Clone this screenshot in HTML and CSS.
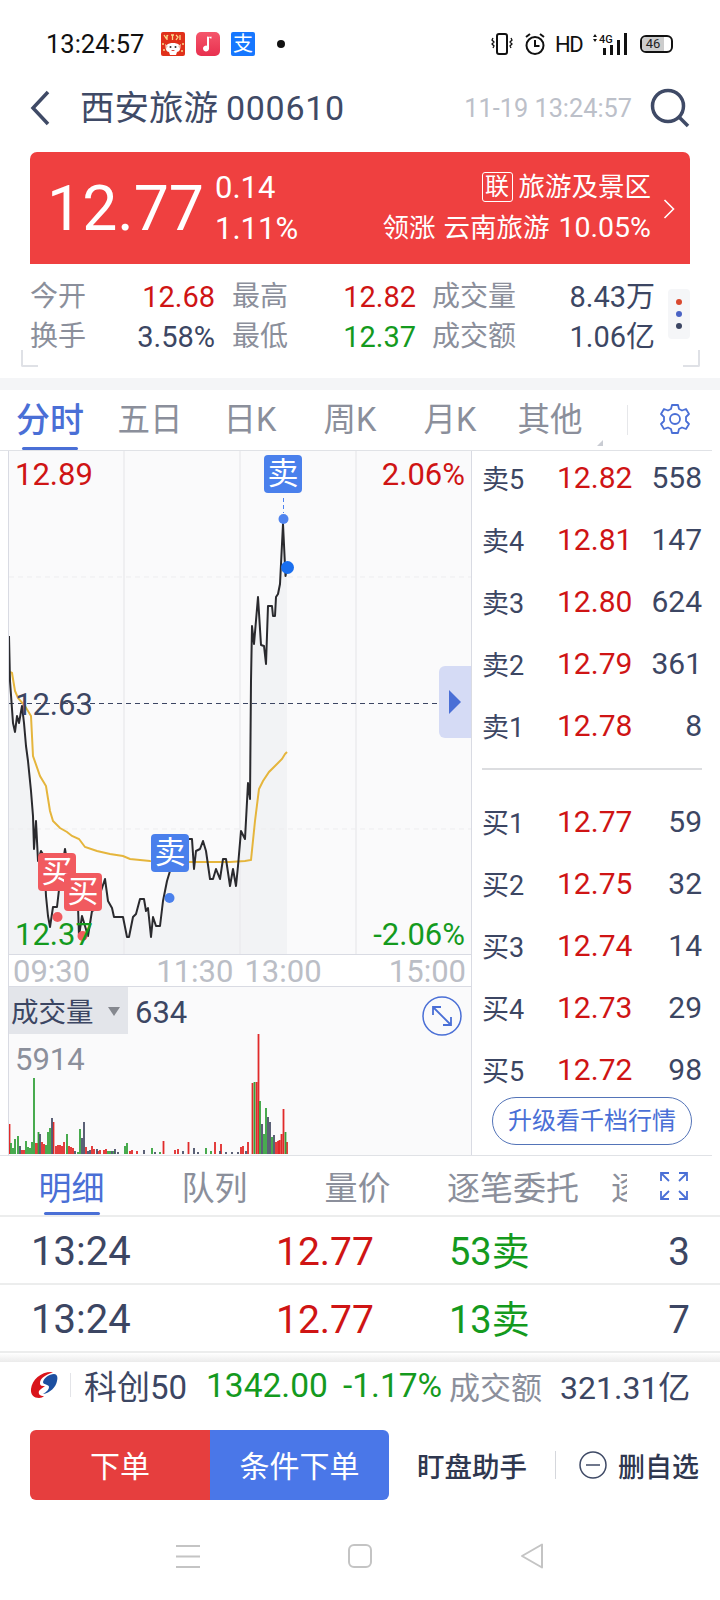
FILE: index.html
```html
<!doctype html>
<html>
	<head>
		<meta charset="utf-8"/>
		<title>西安旅游 000610</title>
		<link rel="stylesheet" href="styles.css">
	</head>
	<body>
		<div id="page">
			<!-- 状态栏 -->
			<div class="status">
				<span class="status-time">13:24:57</span>
				<svg class="app-icon" viewBox="0 0 24 24"><rect width="24" height="24" fill="#e0301a"/><path d="M3 3l2 3 2-3M6 8V3M10 3h3M11.500 3v5M15 3l2 2-2 3M19 3v5M1 12h2M21 12h2M2 18h2M20 19h2" fill="none" stroke="#f8d98a" stroke-width="1.300"/><path d="M5 14c2-3 5-3 7-3s5 0 7 3c1 3-1 6-3 6l-1 3H9l-1-3c-2 0-4-3-3-6z" fill="#fff"/><path d="M4 12l3 2-2 3zM20 12l-3 2 2 3z" fill="#f3c9b5"/><circle cx="9.500" cy="15" r="1" fill="#333"/><circle cx="14.500" cy="15" r="1" fill="#333"/><path d="M10 18q2 2 4 0z" fill="#d8352a"/></svg>
				<svg class="app-icon" viewBox="0 0 24 24"><defs><linearGradient id="music" x1="0" y1="0" x2="0" y2="1"><stop offset="0" stop-color="#f5566b"/><stop offset="1" stop-color="#e8304f"/></linearGradient></defs><rect width="24" height="24" rx="5" fill="url(#music)"/><path d="M13 5v11.500a3 3 0 1 1-2-2.800V4.500q3 .5 4.500 0v2q-1.500.3-2.500-1.500z" fill="#fff"/></svg>
				<span class="app-icon alipay">支</span>
				<span class="status-dot"></span>
				<span class="status-right">
					<svg class="ic-vibrate" viewBox="0 0 22 24"><rect x="6" y="2" width="10" height="20" rx="2" fill="none" stroke="#111" stroke-width="2"/><path d="M2 6l-1 2 2 2-2 2 2 2-1 2M20 6l1 2-2 2 2 2-2 2 1 2" fill="none" stroke="#111" stroke-width="1.300"/></svg>
					<svg class="ic-alarm" viewBox="0 0 22 24"><circle cx="11" cy="13.500" r="8.500" fill="none" stroke="#111" stroke-width="2"/><path d="M11 8v6h4.500M2 5l4-3M20 5l-4-3" fill="none" stroke="#111" stroke-width="2"/></svg>
					<span class="status-hd">HD</span>
					<svg class="ic-signal" viewBox="0 0 38 24"><path d="M3 5l2-3 2 3zM3 7l2 3 2-3z" fill="#111"/><text x="9" y="11" class="signal-text">4G</text><path d="M13 16h3v7h-3zM20 13h3v10h-3zM27 8h3v15h-3zM34 1h3v22h-3z" fill="#111"/></svg>
					<span class="battery"><span class="battery-num">46</span></span>
				</span>
			</div>

			<!-- 标题 -->
			<div class="head">
				<svg class="ic-back" viewBox="0 0 20 36"><path d="M18 2L3 18l15 16" fill="none" stroke="#3f4a66" stroke-width="3.500"/></svg>
				<span class="head-name">西安旅游</span>
				<span class="head-code">000610</span>
				<span class="head-time">11-19 13:24:57</span>
				<svg class="ic-search" viewBox="0 0 40 40"><circle cx="18" cy="18" r="15.500" fill="none" stroke="#3f4a66" stroke-width="3.500"/><path d="M29 29l9 9" stroke="#3f4a66" stroke-width="3.500"/></svg>
			</div>

			<!-- 报价 -->
			<div class="quote">
				<span class="quote-price">12.77</span>
				<div class="quote-change">
					<span>0.14</span>
					<span>1.11%</span>
				</div>
				<div class="quote-right">
					<div class="quote-line"><span class="quote-tag">联</span><span>旅游及景区</span></div>
					<div class="quote-line">领涨<span class="quote-stock">云南旅游</span><span class="quote-pct">10.05%</span></div>
				</div>
				<svg class="ic-more" viewBox="0 0 12 20"><path d="M1.500 1l9 9-9 9" fill="none" stroke="#fff" stroke-width="1.600"/></svg>
			</div>

			<!-- 盘口数据 -->
			<div class="stats">
				<div class="stats-grid">
					<div class="stat"><span class="stat-label">今开</span><span class="red">12.68</span></div>
					<div class="stat"><span class="stat-label">最高</span><span class="red">12.82</span></div>
					<div class="stat"><span class="stat-label">成交量</span><span>8.43万</span></div>
					<div class="stat"><span class="stat-label">换手</span><span>3.58%</span></div>
					<div class="stat"><span class="stat-label">最低</span><span class="green">12.37</span></div>
					<div class="stat"><span class="stat-label">成交额</span><span>1.06亿</span></div>
				</div>
				<div class="dots"><i class="dot-red"></i><i class="dot-blue"></i><i class="dot-dark"></i></div>
				<span class="corner corner-l"></span>
				<span class="corner corner-r"></span>
			</div>
			<div class="sep"></div>

			<!-- 周期切换 -->
			<div class="tabs">
				<span class="tab active">分时<i></i></span>
				<span class="tab">五日</span>
				<span class="tab">日K</span>
				<span class="tab">周K</span>
				<span class="tab">月K</span>
				<span class="tab">其他<b class="tab-more"></b></span>
				<span class="tabs-line"></span>
				<svg class="ic-gear" viewBox="0 0 32 32"><path d="M13 2h6l1 4 3 1.500 4-1.500 3 5-3 3v4l3 3-3 5-4-1.500-3 1.500-1 4h-6l-1-4-3-1.500-4 1.500-3-5 3-3v-4l-3-3 3-5 4 1.500L12 6z" fill="none" stroke="#4a6fd6" stroke-width="1.800" stroke-linejoin="round"/><circle cx="16" cy="16" r="5" fill="none" stroke="#4a6fd6" stroke-width="1.800"/></svg>
			</div>

			<div class="main">
				<div class="left">
					<!-- 分时图 -->
					<div class="chart">
						<svg class="chart-svg" viewBox="9 450 463 505">
							<path class="area" d="M9 635L10 680L13 722L15 731L17 715L19 722L22 705L24 722L26 745L28 760L31 790L33 815L34 848L36 820L38 860L41 850L44 855L46 895L48 915L50 926L53 906L57 906L60 880L65 848L67 860L72 880L78 905L79 935L82 915L85 925L88 935L92 910L98 907L101 890L105 878L108 900L112 907L114 916L123 916L127 936L129 936L133 916L136 913L140 898L144 898L146 910L148 907L151 936L153 916L156 925L160 925L163 900L167 880L170 870L173 865L188 838L192 838L194 868L196 850L200 848L203 840L206 850L210 878L213 878L216 868L220 878L223 858L226 858L230 885L233 868L236 885L238 865L241 830L245 838L248 782L250 798L251 680L252 625L254 643L258 596L261 644L264 645L266 663L268 605L272 605L273 615L275 615L276 596L278 593L280 583L283 523L285.500 575L287 566L287 955L9 955Z"/>
							<path class="grid" d="M124 450V955M240 450V955M356 450V955"/>
							<path class="grid-dash" d="M9 576H472M9 828H472"/>
							<path class="mid-dash" d="M9 702.500H472"/>
							<path class="avg" d="M10 671L12 672L15 690L18 697L25 705L31 715L33 755L40 775L46 785L50 810L53 820L60 827L67 831L72 835L79 838L85 846L97 850L110 853L123 855L130 858L150 860L170 861L190 861L210 861L230 861L245 860L251 859L255 820L259 788L263 780L269 771L275 765L282 758L285 753L287 751"/>
							<path class="price" d="M9 635L10 680L13 722L15 731L17 715L19 722L22 705L24 722L26 745L28 760L31 790L33 815L34 848L36 820L38 860L41 850L44 855L46 895L48 915L50 926L53 906L57 906L60 880L65 848L67 860L72 880L78 905L79 935L82 915L85 925L88 935L92 910L98 907L101 890L105 878L108 900L112 907L114 916L123 916L127 936L129 936L133 916L136 913L140 898L144 898L146 910L148 907L151 936L153 916L156 925L160 925L163 900L167 880L170 870L173 865L188 838L192 838L194 868L196 850L200 848L203 840L206 850L210 878L213 878L216 868L220 878L223 858L226 858L230 885L233 868L236 885L238 865L241 830L245 838L248 782L250 798L251 680L252 625L254 643L258 596L261 644L264 645L266 663L268 605L272 605L273 615L275 615L276 596L278 593L280 583L283 523L285.500 575L287 566"/>
							<path class="mark-dash" d="M283.500 497V512"/>
							<circle cx="283.500" cy="518" r="5" fill="#4f83ee"/>
							<circle cx="287.500" cy="566.500" r="6.500" fill="#1a6fef"/>
							<circle cx="169.500" cy="897" r="5" fill="#4a80ec"/>
							<circle cx="57.500" cy="916" r="5" fill="#f15a5f"/>
							<circle cx="82.500" cy="935" r="5" fill="#f15a5f"/>
						</svg>
						<span class="lab lab-top red">12.89</span>
						<span class="lab lab-rtop red">2.06%</span>
						<span class="lab lab-mid">12.63</span>
						<span class="lab lab-bot green">12.37</span>
						<span class="lab lab-rbot green">-2.06%</span>
						<span class="mark sell mark-1">卖</span>
						<span class="mark sell mark-2">卖</span>
						<span class="mark buy mark-3">买</span>
						<span class="mark buy mark-4">买</span>
						<span class="chart-handle"><i></i></span>
					</div>
					<div class="axis">
						<span>09:30</span><span>11:30</span><span>13:00</span><span>15:00</span>
					</div>
					<!-- 成交量 -->
					<div class="vol">
						<svg class="vol-svg" viewBox="9 988 463 167">
							<path class="bar-r" d="M9.500 1155V1125M22 1155V1151M24 1155V1151M36 1155V1144M38 1155V1144M42 1155V1143M44 1155V1145M53.500 1155V1123M56 1155V1147M58 1155V1146M60 1155V1146M62 1155V1147M64 1155V1143M69 1155V1147M71 1155V1148M73 1155V1149M86 1155V1148M92 1155V1147M94 1155V1150M98 1155V1152M100 1155V1151M104 1155V1151M106 1155V1150M130 1155V1152M132 1155V1151M137 1155V1152M163.500 1155V1142M175 1155V1151M178 1155V1150M188.500 1155V1143M215 1155V1143M221 1155V1145M241 1155V1148M243 1155V1147M248 1155V1143M252.500 1155V1084M256.500 1155V1083M258.500 1155V1035M276 1155V1143M278 1155V1142M279.500 1155V1141M281.500 1155V1135M283.500 1155V1110M287 1155V1143"/>
							<path class="bar-g" d="M11 1155V1144M13 1155V1149M15 1155V1140M18 1155V1137M26 1155V1142M28 1155V1148M30 1155V1149M32 1155V1143M34 1155V1079M38.500 1155V1133M46 1155V1146M48 1155V1133M50 1155V1129M67 1155V1135M78 1155V1153M80 1155V1130M108 1155V1152M110 1155V1152M114 1155V1152M125 1155V1147M127 1155V1144M152 1155V1149M160 1155V1153M206 1155V1149M211 1155V1152M254.500 1155V1083M260 1155V1102M264 1155V1135M266 1155V1109M272 1155V1138M285.500 1155V1133"/>
							<path class="bar-d" d="M20 1155V1147M40 1155V1135M52 1155V1119M75 1155V1152M82 1155V1139M84 1155V1123M88 1155V1152M90 1155V1151M97 1155V1150M112 1155V1152M115 1155V1150M118 1155V1153M144 1155V1151M155 1155V1153M183 1155V1152M194 1155V1149M198 1155V1153M220 1155V1152M226 1155V1153M232 1155V1153M238 1155V1153M246 1155V1152M262 1155V1125M268 1155V1118M270 1155V1123M274 1155V1136"/>
						</svg>
						<div class="vol-head">
							<span class="vol-chip">成交量<i></i></span>
							<span class="vol-num">634</span>
							<svg class="ic-expand" viewBox="0 0 40 40"><circle cx="20" cy="20" r="19" fill="none" stroke="#4a6fd6" stroke-width="1.500"/><path d="M11 11l18 18M11 19v-8h8M29 21v8h-8" fill="none" stroke="#4a6fd6" stroke-width="1.800"/></svg>
						</div>
						<span class="vol-max">5914</span>
					</div>
				</div>

				<!-- 五档 -->
				<div class="book">
					<div class="book-row"><span>卖5</span><span class="red">12.82</span><span>558</span></div>
					<div class="book-row"><span>卖4</span><span class="red">12.81</span><span>147</span></div>
					<div class="book-row"><span>卖3</span><span class="red">12.80</span><span>624</span></div>
					<div class="book-row"><span>卖2</span><span class="red">12.79</span><span>361</span></div>
					<div class="book-row"><span>卖1</span><span class="red">12.78</span><span>8</span></div>
					<div class="book-line"></div>
					<div class="book-row"><span>买1</span><span class="red">12.77</span><span>59</span></div>
					<div class="book-row"><span>买2</span><span class="red">12.75</span><span>32</span></div>
					<div class="book-row"><span>买3</span><span class="red">12.74</span><span>14</span></div>
					<div class="book-row"><span>买4</span><span class="red">12.73</span><span>29</span></div>
					<div class="book-row"><span>买5</span><span class="red">12.72</span><span>98</span></div>
					<a class="book-btn">升级看千档行情</a>
				</div>
			</div>

			<!-- 明细 -->
			<div class="dtabs">
				<div class="dtabs-list">
					<span class="dtab active">明细<i></i></span>
					<span class="dtab">队列</span>
					<span class="dtab">量价</span>
					<span class="dtab dtab-wide">逐笔委托</span>
					<span class="dtab dtab-cut">逐笔成交</span>
				</div>
				<svg class="ic-full" viewBox="0 0 28 28"><path d="M1 9V1h8M1 1l8 8M27 9V1h-8M27 1l-8 8M1 19v8h8M1 27l8-8M27 19v8h-8M27 27l-8-8" fill="none" stroke="#4a6fd6" stroke-width="1.800"/></svg>
			</div>
			<div class="trade">
				<span class="trade-time">13:24</span><span class="trade-price red">12.77</span><span class="trade-vol green">53卖</span><span class="trade-num">3</span>
			</div>
			<div class="trade">
				<span class="trade-time">13:24</span><span class="trade-price red">12.77</span><span class="trade-vol green">13卖</span><span class="trade-num">7</span>
			</div>
			<div class="shadow"></div>

			<!-- 指数 -->
			<div class="index">
				<svg class="ic-logo" viewBox="0 0 28 28"><path d="M23 1C12 0 2 8 1 18c-.5 6 3 9 8 9 2 0 4-1 5-2-4 0-6-2-5-5 1-2 4-3 6-5-3 0-5 0-5-3 0-5 6-8 13-11z" fill="#d9141b"/><path d="M13 11c1-4 6-8 11-8 3 0 4 3 3 7-1 6-7 12-14 13 4-2 6-5 6-7 0-3-6-2-6-5z" fill="#1c4fa0"/></svg>
				<span class="index-line"></span>
				<span class="index-name">科创50</span>
				<span class="index-val green">1342.00</span>
				<span class="index-pct green">-1.17%</span>
				<span class="index-label">成交额</span>
				<span class="index-amt">321.31亿</span>
			</div>

			<!-- 操作 -->
			<div class="actions">
				<div class="btns">
					<a class="btn btn-red">下单</a>
					<a class="btn btn-blue">条件下单</a>
				</div>
				<span class="act-text">盯盘助手</span>
				<span class="act-line"></span>
				<svg class="ic-minus" viewBox="0 0 28 28"><circle cx="14" cy="14" r="13" fill="none" stroke="#3f4a66" stroke-width="1.500"/><path d="M7 14h14" stroke="#3f4a66" stroke-width="1.500"/></svg>
				<span class="act-del">删自选</span>
			</div>

			<!-- 导航条 -->
			<div class="nav">
				<svg class="nav-menu" viewBox="0 0 24 24"><path d="M0 2h24M0 12.500h24M0 23h24" stroke="#c4c4c4" stroke-width="2"/></svg>
				<svg class="nav-home" viewBox="0 0 24 24"><rect x="1" y="1" width="22" height="22" rx="5" fill="none" stroke="#c4c4c4" stroke-width="2"/></svg>
				<svg class="nav-back" viewBox="0 0 24 26"><path d="M22 1.500v23L2 13z" fill="none" stroke="#c4c4c4" stroke-width="2" stroke-linejoin="round"/></svg>
			</div>
		</div>
	</body>
</html>
```

FILE: styles.css
```css
*{margin:0;padding:0;box-sizing:border-box;}
body{
	background:#fff;
	font-family:Roboto,"Noto Sans CJK SC",sans-serif;
	color:#3c4663;
}
#page{
	width:720px;
	height:1600px;
	overflow:hidden;
	display:flex;
	flex-direction:column;
}
i{display:block;font-style:normal;}
svg{display:block;flex:none;}
.red{color:#cf1414;}
.green{color:#149a1e;}

/* status */
.status{
	height:88px;
	flex:none;
	display:flex;
	align-items:center;
	padding-left:46px;
	color:#111;
}
.status-time{font-size:25.500px;width:115px;}
.app-icon{width:24px;height:24px;margin-right:11px;border-radius:2px;}
.alipay{
	background:#1677ff;
	color:#fff;
	font-size:20px;
	line-height:24px;
	text-align:center;
}
.status-dot{
	width:8px;
	height:8px;
	border-radius:50%;
	background:#111;
	margin-left:11px;
}
.status-right{
	margin-left:auto;
	padding-right:47px;
	display:flex;
	align-items:center;
}
.ic-vibrate{width:22px;height:24px;margin-right:11px;}
.ic-alarm{width:22px;height:24px;margin-right:9px;}
.status-hd{font-size:22px;letter-spacing:-1.500px;width:35px;}
.ic-signal{width:38px;height:24px;margin-right:12px;}
.signal-text{font-size:11px;font-weight:500;fill:#111;font-family:Roboto,sans-serif;}
.battery{
	width:33px;
	height:18px;
	border:2px solid #111;
	border-radius:6px;
	display:block;
	overflow:hidden;
}
.battery-num{
	display:block;
	width:22px;
	height:14px;
	background:#ccc;
	font-size:13px;
	line-height:14px;
	text-align:center;
	color:#222;
}

/* head */
.head{
	height:64px;
	flex:none;
	display:flex;
	align-items:center;
	padding:0 30px 24px;
	color:#3f4a66;
}
.ic-back{width:20px;height:36px;margin-right:30px;}
.head-name{font-size:34.500px;line-height:40px;}
.head-code{font-size:34px;line-height:40px;margin-left:8px;letter-spacing:.7px;}
.head-time{margin-left:auto;font-size:25.300px;color:#bcc0c9;margin-right:18px;}
.ic-search{width:40px;height:40px;}

/* quote */
.quote{
	height:112px;
	flex:none;
	margin:0 30px;
	background:#ef4040;
	border-radius:7px 7px 0 0;
	color:#fff;
	display:flex;
	align-items:center;
	padding-left:17px;
	position:relative;
}
.quote-price{font-size:62.500px;line-height:70px;width:168px;margin-top:2px;}
.quote-change{
	display:flex;
	flex-direction:column;
	gap:10px;
	font-size:31px;
	line-height:31px;
}
.quote-right{
	margin-left:auto;
	margin-right:39px;
	display:flex;
	flex-direction:column;
	align-items:flex-end;
	gap:7px;
	font-size:26.500px;
	line-height:34px;
	margin-top:-2px;
}
.quote-line{display:flex;align-items:center;}
.quote-stock{margin-left:8px;}
.quote-pct{margin-left:9px;font-size:28.500px;}
.quote-tag{
	width:31px;
	height:30px;
	border:1px solid #fff;
	border-radius:3px;
	line-height:28px;
	text-align:center;
	font-size:24px;
	margin-right:6px;
}
.ic-more{width:12px;height:20px;position:absolute;right:15px;top:47px;}

/* stats */
.stats{
	height:114px;
	flex:none;
	display:flex;
	align-items:flex-start;
	padding:13px 30px 0 30px;
	position:relative;
	font-size:29px;
}
.stats-grid{
	display:grid;
	grid-template-columns:185px 184px 222px;
	column-gap:17px;
	width:624px;
}
.stats-grid .stat:nth-child(3n){margin-left:-1px;}
.stat{
	display:flex;
	justify-content:space-between;
	height:40px;
	line-height:40px;
}
.stat-label{color:#8b8f9b;font-size:28px;}
.dots{
	width:22px;
	height:50px;
	margin-left:14px;
	margin-top:12px;
	background:#f5f6f8;
	border-radius:4px;
	display:flex;
	flex-direction:column;
	align-items:center;
	justify-content:center;
	gap:6px;
}
.dots i{width:6px;height:6px;border-radius:50%;}
.dot-red{background:#d9492f;}
.dot-blue{background:#4a63c4;}
.dot-dark{background:#3c4663;}
.corner{
	position:absolute;
	bottom:11px;
	width:17px;
	height:17px;
	border-bottom:2px solid #dfe1e6;
}
.corner-l{left:21px;border-left:2px solid #dfe1e6;border-bottom-left-radius:2px;}
.corner-r{left:683px;border-right:2px solid #dfe1e6;border-bottom-right-radius:2px;}
.sep{height:12px;flex:none;background:#f4f5f7;}

/* tabs */
.tabs{
	height:60px;
	flex:none;
	display:flex;
	align-items:center;
	position:relative;
}
.tab{
	width:100px;
	text-align:center;
	font-size:32.500px;
	line-height:60px;
	height:60px;
	color:#8b8f9b;
	position:relative;
}
.tab.active{color:#4a6fd6;font-weight:500;font-size:34px;}
.tab.active i{
	position:absolute;
	left:22px;
	right:22px;
	bottom:0;
	height:3px;
	border-radius:2px;
	background:#4a6fd6;
}
.tab-more{
	position:absolute;
	right:-3px;
	bottom:4px;
	width:0;
	height:0;
	border-bottom:6px solid #c9ccd3;
	border-left:6px solid transparent;
}
.tabs-line{width:1px;height:30px;background:#e6e7ea;margin-left:27px;}
.ic-gear{width:32px;height:32px;margin-left:31px;margin-top:-2px;}

/* chart */
.main{
	height:706px;
	flex:none;
	display:flex;
	margin-right:8px;
	border-top:1px solid #e0e2e6;
	border-bottom:1px solid #e0e2e6;
}
.left{
	width:464px;
	flex:none;
	margin-left:8px;
	display:flex;
	flex-direction:column;
	border-left:1px solid #d9dbe3;
	border-right:1px solid #d9dbe3;
}
.chart{
	height:504px;
	flex:none;
	background:#fafafb;
	position:relative;
	overflow:hidden;
	border-bottom:1px solid #d9dbe3;
}
.chart-svg{position:absolute;left:0;top:0;width:463px;height:505px;}
.area{fill:#f2f3f5;}
.grid{stroke:#ececee;stroke-width:1.500;fill:none;}
.grid-dash{stroke:#ededef;stroke-width:1;stroke-dasharray:5 4;fill:none;}
.mid-dash{stroke:#3c4663;stroke-width:1;stroke-dasharray:5 4;fill:none;}
.avg{stroke:#e5b53c;stroke-width:2;fill:none;}
.price{stroke:#2a2a2e;stroke-width:2;fill:none;stroke-linejoin:round;}
.mark-dash{stroke:#4f83ee;stroke-width:1;stroke-dasharray:4 3;}
.lab{position:absolute;font-size:31px;line-height:36px;}
.lab-top{left:6px;top:6px;}
.lab-rtop{right:6px;top:6px;}
.lab-mid{left:6px;top:236px;}
.lab-bot{left:6px;top:466px;}
.lab-rbot{right:6px;top:466px;}
.mark{
	position:absolute;
	width:38px;
	height:38px;
	border-radius:4px;
	color:#fff;
	font-size:31px;
	line-height:37px;
	text-align:center;
}
.sell{background:#4a80ec;}
.buy{background:#f15a5f;}
.mark-1{left:255px;top:4px;}
.mark-2{left:142px;top:383px;}
.mark-3{left:29px;top:402px;}
.mark-4{left:55px;top:422px;}
.chart-handle{
	position:absolute;
	right:0;
	top:215px;
	width:32px;
	height:72px;
	background:#d5dbf5;
	border-radius:6px 0 0 6px;
	display:flex;
	align-items:center;
	justify-content:center;
}
.chart-handle i{
	width:0;
	height:0;
	border-left:12px solid #4a6fd6;
	border-top:12px solid transparent;
	border-bottom:12px solid transparent;
}
.axis{
	height:32px;
	flex:none;
	display:flex;
	padding:0 5px 0 4px;
	font-size:31px;
	line-height:34px;
	color:#bbbec6;
	border-bottom:1px solid #d9dbe3;
}
.axis span:nth-child(2){margin-left:66px;}
.axis span:nth-child(3){margin-left:11px;}
.axis span:nth-child(4){margin-left:auto;}
.vol{
	flex:1;
	background:#fafafb;
	position:relative;
}
.vol-svg{position:absolute;left:0;top:0;width:463px;height:167px;}
.bar-r{stroke:#e02a2a;stroke-width:1.800;fill:none;}
.bar-g{stroke:#35a23c;stroke-width:1.800;fill:none;}
.bar-d{stroke:#4a5068;stroke-width:1.800;fill:none;}
.vol-head{
	display:flex;
	position:relative;
	height:47px;
}
.vol-chip{
	width:119px;
	height:47px;
	background:#e3e5ea;
	font-size:27.500px;
	line-height:52px;
	padding-left:2px;
	position:relative;
}
.vol-chip i{
	position:absolute;
	right:8px;
	top:20px;
	width:0;
	height:0;
	border-top:9px solid #85888f;
	border-left:6px solid transparent;
	border-right:6px solid transparent;
}
.vol-num{font-size:31px;line-height:52px;margin-left:7px;}
.ic-expand{width:40px;height:40px;margin-left:auto;margin-right:9px;margin-top:9px;}
.vol-max{
	position:absolute;
	left:6px;
	top:55px;
	font-size:31px;
	line-height:36px;
	color:#8b8f9b;
}

/* book */
.book{
	flex:1;
	padding:1px 10px 0 10px;
	display:flex;
	flex-direction:column;
	gap:12px;
}
.book-row{
	height:50px;
	flex:none;
	display:grid;
	grid-template-columns:75px 1fr auto;
	align-items:center;
	font-size:30px;
}
.book-row span:first-child{font-size:27px;}
.book-row .red{font-size:30px;}
.book-line{
	height:2px;
	flex:none;
	background:#dcdde0;
	margin:6px 0 14px 0;
}
.book-btn{
	width:200px;
	height:48px;
	flex:none;
	margin:-9px 0 0 10px;
	border:1px solid #5474b8;
	border-radius:24px;
	color:#4a6fd6;
	font-size:24px;
	line-height:46px;
	text-align:center;
}

/* detail tabs */
.dtabs{
	height:61px;
	flex:none;
	display:flex;
	align-items:flex-start;
	border-bottom:2px solid #eceded;
}
.dtabs-list{
	width:627px;
	height:59px;
	flex:none;
	display:flex;
	overflow:hidden;
}
.dtab{
	width:143px;
	flex:none;
	text-align:center;
	font-size:33px;
	padding-top:7px;
	line-height:52px;
	color:#8b8f9b;
	position:relative;
}
.dtab.active{color:#4a6fd6;}
.dtab.active i{
	position:absolute;
	left:44px;
	width:56px;
	bottom:0;
	height:3px;
	border-radius:2px;
	background:#4a6fd6;
}
.dtab-wide{width:168px;}
.dtab-cut{margin-left:14px;text-align:left;width:140px;}
.ic-full{width:28px;height:28px;margin-left:33px;margin-top:16px;}
.trade{
	height:68px;
	flex:none;
	display:flex;
	align-items:baseline;
	line-height:69px;
	padding:0 30px 0 31px;
	font-size:39px;
	border-bottom:2px solid #eceded;
}
.trade-time{width:245px;font-size:40px;}
.trade-price{width:173px;}
.trade-vol{width:100px;font-size:38px;}
.trade-num{margin-left:auto;font-size:38.500px;}
.shadow{
	height:9px;
	flex:none;
	background:linear-gradient(#fff,#ebebeb);
}

/* index */
.index{
	height:50px;
	flex:none;
	display:flex;
	align-items:center;
	padding-left:30px;
	padding-bottom:4px;
	white-space:nowrap;
}
.ic-logo{width:28px;height:28px;}
.index-line{width:1px;height:24px;background:#e3e4e8;margin:0 13px 0 12px;}
.index-name{font-size:33px;width:122px;}
.index-val{font-size:33.500px;width:137px;}
.index-pct{font-size:33.500px;width:106px;}
.index-label{font-size:31px;color:#8b8f9b;width:111px;}
.index-amt{font-size:32px;}

/* actions */
.actions{
	height:70px;
	flex:none;
	margin-top:18px;
	display:flex;
	align-items:center;
	padding-left:30px;
}
.btns{
	width:359px;
	height:70px;
	flex:none;
	display:flex;
	border-radius:6px;
	overflow:hidden;
	color:#fff;
	font-size:30px;
	line-height:73px;
	text-align:center;
}
.btn{display:block;}
.btn-red{width:180px;background:#e63e3e;}
.btn-blue{width:179px;background:#4a77e8;}
.act-text{
	margin-left:28px;
	font-size:27.500px;
	font-weight:500;
	color:#2f374f;
}
.act-line{width:1px;height:28px;background:#d5d7dc;margin-left:28px;}
.ic-minus{width:28px;height:28px;margin-left:23px;}
.act-del{margin-left:11px;font-size:27px;font-weight:500;color:#2f374f;}

/* nav */
.nav{
	flex:1;
	display:flex;
	align-items:center;
	padding-left:176px;
	padding-top:12px;
}
.nav-menu{width:24px;height:24px;}
.nav-home{width:24px;height:24px;margin-left:148px;}
.nav-back{width:24px;height:26px;margin-left:148px;}
```
